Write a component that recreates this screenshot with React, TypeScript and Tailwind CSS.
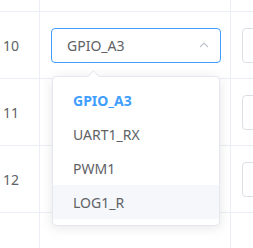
import React from "react";

const rows = ["10", "11", "12", ""];
const options = ["GPIO_A3", "UART1_RX", "PWM1", "LOG1_R"];

function Row({ n, first }: { n: string; first?: boolean }) {
  return (
    <div className="flex h-[67px] border-b border-[#ebeef5]">
      <div className="w-[40px] shrink-0 border-r border-[#ebeef5] flex items-center pl-[3px] text-[14px] text-[#606266]">
        {n}
      </div>
      <div className="w-[191px] shrink-0 border-r border-[#ebeef5] flex items-center pl-[11px]">
        {first && (
          <div className="w-[170px] h-[35px] rounded-[4px] border border-[#409eff] flex items-center justify-between pl-[15px] pr-[10px]">
            <span className="text-[14px] text-[#606266]">GPIO_A3</span>
            <svg width="12" height="12" viewBox="0 0 12 12" fill="none">
              <path d="M2 8 L6 4 L10 8" stroke="#c0c4cc" strokeWidth="1.2" />
            </svg>
          </div>
        )}
      </div>
      <div className="flex-1 flex items-center pl-[11px]">
        {n && <div className="w-[40px] h-[35px] rounded-[4px] border border-[#dcdfe6] bg-white" />}
      </div>
    </div>
  );
}

export default function App() {
  return (
    <div className="relative w-[253px] h-[248px] overflow-hidden bg-white" style={{ fontFamily: '"Noto Sans", "Liberation Sans", sans-serif' }}>
      <div className="flex h-[12px] border-b border-[#ebeef5]">
        <div className="w-[40px] border-r border-[#ebeef5]" />
        <div className="w-[191px] border-r border-[#ebeef5]" />
        <div className="flex-1" />
      </div>
      {rows.map((n, i) => (
        <Row key={i} n={n} first={i === 0} />
      ))}
      <div className="absolute left-[52px] top-[76px] w-[168px] bg-white rounded-[4px] border border-[#e4e7ed] shadow-[0_2px_12px_rgba(0,0,0,0.1)] py-[6px]">
        <div className="absolute -top-[5px] left-[36px] w-[9px] h-[9px] rotate-45 bg-white border-l border-t border-[#e4e7ed]" />
        {options.map((o, i) => (
          <div
            key={o}
            className={`h-[34px] flex items-center pl-[20px] text-[14px] ${
              i === 0 ? "text-[#409eff] font-bold" : "text-[#606266]"
            } ${i === 3 ? "bg-[#f5f7fa]" : ""}`}
          >
            {o}
          </div>
        ))}
      </div>
    </div>
  );
}
